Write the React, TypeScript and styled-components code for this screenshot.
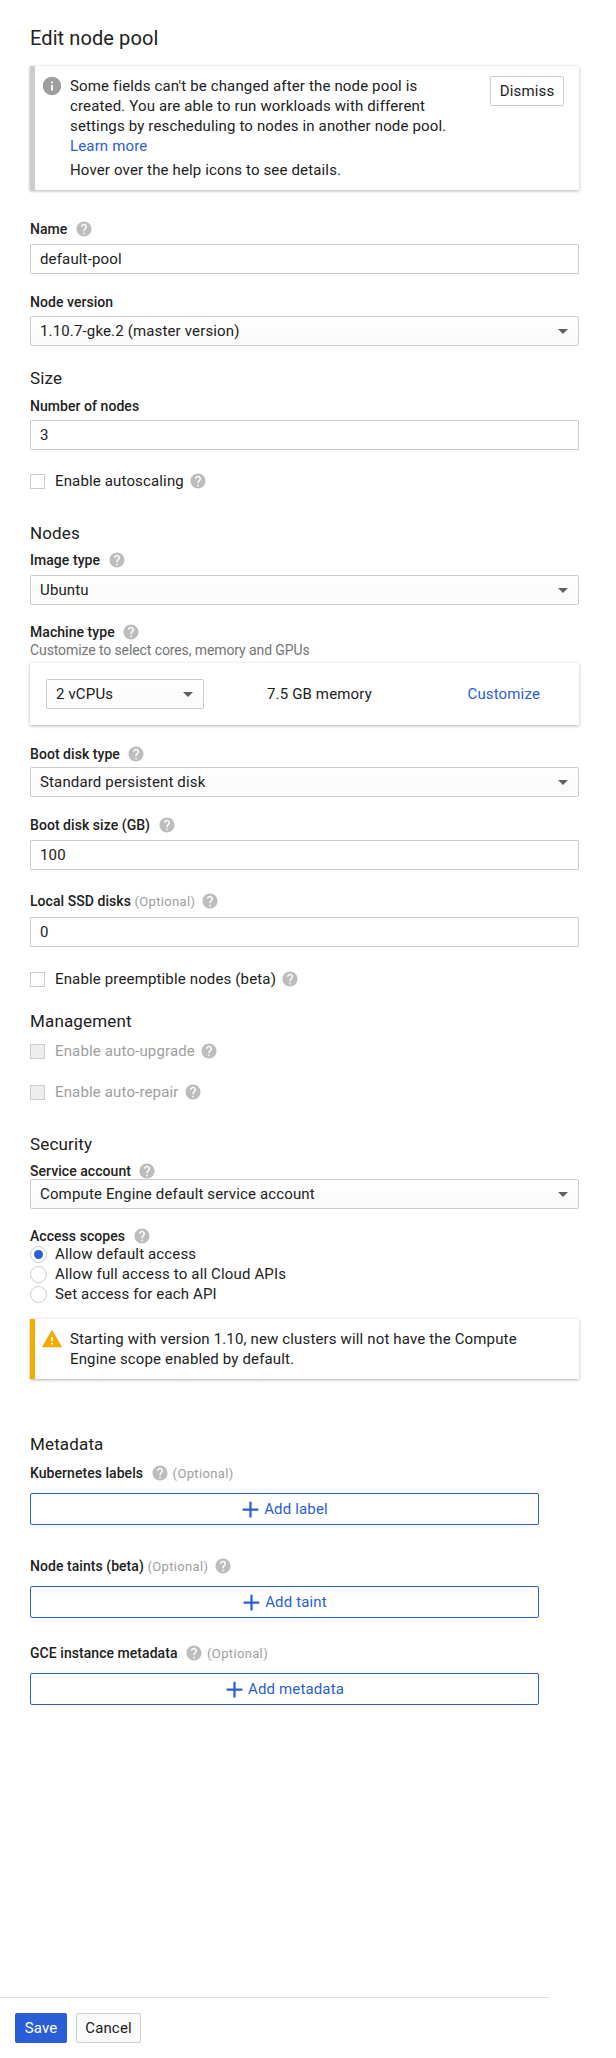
import { ReactNode } from 'react';
import styled, { createGlobalStyle } from 'styled-components';

const GlobalStyle = createGlobalStyle`
  html, body {
    margin: 0;
    padding: 0;
    background: #fff;
  }

  body {
    font-family: Roboto, "Liberation Sans", sans-serif;
    font-size: 15px;
    letter-spacing: 0.15px;
    color: #212121;
  }
`;

const BLUE = '#2a5ed6';

const Page = styled.div`
  display: flex;
  flex-direction: column;
  width: 616px;
  height: 2058px;
  box-sizing: border-box;
`;

const Form = styled.div`
  display: flex;
  flex-direction: column;
  flex: 1;
  padding: 24px 37px 0 30px;
`;

const Title = styled.h1`
  margin: 0;
  font-size: 20px;
  font-weight: 400;
  line-height: 28px;
  letter-spacing: 0.1px;
`;

const Banner = styled.div<{ $accent: string; $top: number }>`
  display: flex;
  margin-top: ${({ $top }) => $top}px;
  padding: 10px 15px 10px 8px;
  border-left: 5px solid ${({ $accent }) => $accent};
  background: #fff;
  box-shadow: 0 1px 3px rgba(0, 0, 0, 0.3);
`;

const BannerIcon = styled.svg<{ $color: string }>`
  flex: none;
  width: 22px;
  height: 22px;
  margin: -1px 7px 0 -2px;
  fill: ${({ $color }) => $color};
`;

const BannerBody = styled.div`
  flex: 1;
  line-height: 20px;
`;

const BannerLine = styled.p`
  margin: 4px 0 0;
`;

const Link = styled.a`
  color: ${BLUE};
  text-decoration: none;
`;

const OutlineButton = styled.button`
  width: 74px;
  height: 30px;
  padding: 0;
  border: 1px solid #ccc;
  border-radius: 2px;
  background: #fff;
  font: inherit;
  letter-spacing: inherit;
  color: #212121;
`;

const Heading = styled.h2<{ $top: number }>`
  height: 24px;
  margin: ${({ $top }) => $top}px 0 0;
  font-size: 17px;
  font-weight: 400;
  line-height: 26px;
`;

const Field = styled.div<{ $top: number }>`
  display: flex;
  flex-direction: column;
  margin-top: ${({ $top }) => $top}px;
`;

const Label = styled.div<{ $gap?: number; $spread?: number }>`
  display: flex;
  align-items: center;
  gap: ${({ $spread }) => $spread ?? 4}px;
  height: 18px;
  margin-bottom: ${({ $gap }) => $gap ?? 5}px;
  font-size: 14px;
  font-weight: 500;
  letter-spacing: 0.05px;
  white-space: pre;
`;

const Optional = styled.span`
  font-size: 13px;
  font-weight: 400;
  letter-spacing: 0.35px;
  color: #9e9e9e;
`;

const Hint = styled.div`
  margin-bottom: 4px;
  font-size: 14px;
  letter-spacing: -0.1px;
  line-height: 18px;
  color: #757575;
`;

const HelpGlyph = styled.svg`
  flex: none;
  width: 18px;
  height: 18px;
  fill: #bdbdbd;
`;

const TextInput = styled.div`
  display: flex;
  align-items: center;
  height: 30px;
  box-sizing: border-box;
  padding: 0 9px;
  border: 1px solid #ccc;
  border-radius: 1px;
  background: #fff;
`;

const Select = styled.div<{ $width?: number }>`
  display: flex;
  align-items: center;
  justify-content: space-between;
  width: ${({ $width }) => ($width ? `${$width}px` : 'auto')};
  height: 30px;
  box-sizing: border-box;
  padding: 0 10px 0 9px;
  border: 1px solid #ccc;
  border-radius: 2px;
  background: linear-gradient(#fff, #fafafa);
`;

const Caret = styled.span`
  width: 0;
  height: 0;
  border-left: 5px solid transparent;
  border-right: 5px solid transparent;
  border-top: 5px solid #616161;
`;

const CheckRow = styled.div<{ $top: number; $disabled?: boolean }>`
  display: flex;
  align-items: center;
  height: 20px;
  margin-top: ${({ $top }) => $top}px;
  color: ${({ $disabled }) => ($disabled ? '#9e9e9e' : '#212121')};
`;

const Box = styled.span<{ $disabled?: boolean }>`
  flex: none;
  width: 15px;
  height: 15px;
  box-sizing: border-box;
  margin-right: 10px;
  border: 1px solid #ccc;
  background: ${({ $disabled }) => ($disabled ? '#eee' : '#fff')};
`;

const RowHelp = styled.span`
  display: flex;
  margin-left: 5px;
`;

const MachineCard = styled.div`
  display: grid;
  grid-template-columns: 158px 1fr auto;
  align-items: center;
  height: 62px;
  box-sizing: border-box;
  padding: 0 39px 0 16px;
  background: #fff;
  box-shadow: 0 1px 3px rgba(0, 0, 0, 0.3);
`;

const Memory = styled.span`
  padding-left: 63px;
`;

const RadioGroup = styled.div`
  display: flex;
  flex-direction: column;
`;

const RadioRow = styled.div`
  display: flex;
  align-items: center;
  height: 20px;
`;

const RadioDot = styled.span<{ $on?: boolean }>`
  flex: none;
  display: flex;
  align-items: center;
  justify-content: center;
  width: 17px;
  height: 17px;
  box-sizing: border-box;
  margin-right: 8px;
  border: 1px solid #ccc;
  border-radius: 50%;
  background: #fff;

  &::after {
    content: '';
    display: ${({ $on }) => ($on ? 'block' : 'none')};
    width: 9px;
    height: 9px;
    border-radius: 50%;
    background: ${BLUE};
  }
`;

const AddButton = styled.button`
  display: flex;
  align-items: center;
  justify-content: center;
  width: 509px;
  height: 32px;
  padding: 0 4px 0 0;
  border: 1px solid ${BLUE};
  border-radius: 2px;
  background: #fff;
  font: inherit;
  letter-spacing: inherit;
  color: ${BLUE};
`;

const PlusIcon = styled.svg`
  width: 27px;
  height: 27px;
  fill: ${BLUE};
`;

const Footer = styled.div`
  display: flex;
  gap: 9px;
  width: 549px;
  box-sizing: border-box;
  padding: 15px 0 15px 15px;
  border-top: 1px solid #e0e0e0;
`;

const SaveButton = styled.button`
  width: 52px;
  height: 30px;
  padding: 0;
  border: 0;
  border-radius: 2px;
  background: ${BLUE};
  font: inherit;
  letter-spacing: inherit;
  color: #fff;
`;

const CancelButton = styled(OutlineButton)`
  width: 65px;
  background: #fafafa;
`;

const Help = () => (
  <HelpGlyph viewBox='0 0 24 24'>
    <path d='M12 2C6.48 2 2 6.48 2 12s4.48 10 10 10 10-4.48 10-10S17.52 2 12 2zm1 17h-2v-2h2v2zm2.07-7.75l-.9.92C13.45 12.9 13 13.5 13 15h-2v-.5c0-1.1.45-2.1 1.17-2.83l1.24-1.26c.37-.36.59-.86.59-1.41 0-1.1-.9-2-2-2s-2 .9-2 2H8c0-2.21 1.79-4 4-4s4 1.79 4 4c0 .88-.36 1.68-.93 2.25z' />
  </HelpGlyph>
);

const Dropdown = ({ value, width }: { value: string; width?: number }) => (
  <Select $width={width}>
    {value}
    <Caret />
  </Select>
);

const Check = ({ text, top, disabled }: { text: string; top: number; disabled?: boolean }) => (
  <CheckRow $top={top} $disabled={disabled}>
    <Box $disabled={disabled} />
    {text}
    <RowHelp>
      <Help />
    </RowHelp>
  </CheckRow>
);

const AddField = ({
  top,
  label,
  text,
  spread,
}: {
  top: number;
  label: ReactNode;
  text: string;
  spread?: number;
}) => (
  <Field $top={top}>
    <Label $gap={11} $spread={spread}>
      {label}
    </Label>
    <AddButton>
      <PlusIcon viewBox='0 0 24 24'>
        <path d='M19 13h-6v6h-2v-6H5v-2h6V5h2v6h6v2z' />
      </PlusIcon>
      {text}
    </AddButton>
  </Field>
);

const App = () => {
  return (
    <Page>
      <GlobalStyle />
      <Form>
        <Title>Edit node pool</Title>

        <Banner $accent='#ccc' $top={14}>
          <BannerIcon $color='#9e9e9e' viewBox='0 0 24 24'>
            <path d='M12 2C6.48 2 2 6.48 2 12s4.48 10 10 10 10-4.48 10-10S17.52 2 12 2zm1 15h-2v-6h2v6zm0-8h-2V7h2v2z' />
          </BannerIcon>
          <BannerBody>
            Some fields can't be changed after the node pool is
            <br />
            created. You are able to run workloads with different
            <br />
            settings by rescheduling to nodes in another node pool.
            <br />
            <Link>Learn more</Link>
            <BannerLine>Hover over the help icons to see details.</BannerLine>
          </BannerBody>
          <OutlineButton>Dismiss</OutlineButton>
        </Banner>

        <Field $top={30}>
          <Label $gap={6}>
            Name <Help />
          </Label>
          <TextInput>default-pool</TextInput>
        </Field>

        <Field $top={19}>
          <Label>Node version</Label>
          <Dropdown value='1.10.7-gke.2 (master version)' />
        </Field>

        <Heading $top={19}>Size</Heading>
        <Field $top={8}>
          <Label>Number of nodes</Label>
          <TextInput>3</TextInput>
        </Field>
        <Check text='Enable autoscaling' top={21} />

        <Heading $top={29}>Nodes</Heading>
        <Field $top={7}>
          <Label $gap={6}>
            Image type <Help />
          </Label>
          <Dropdown value='Ubuntu' />
        </Field>

        <Field $top={18}>
          <Label $gap={0}>
            Machine type <Help />
          </Label>
          <Hint>Customize to select cores, memory and GPUs</Hint>
          <MachineCard>
            <Dropdown value='2 vCPUs' width={158} />
            <Memory>7.5 GB memory</Memory>
            <Link>Customize</Link>
          </MachineCard>
        </Field>

        <Field $top={20}>
          <Label $gap={4}>
            Boot disk type <Help />
          </Label>
          <Dropdown value='Standard persistent disk' />
        </Field>

        <Field $top={19}>
          <Label $gap={6}>
            Boot disk size (GB) <Help />
          </Label>
          <TextInput>100</TextInput>
        </Field>

        <Field $top={22}>
          <Label $gap={7} $spread={6}>
            <span>
              Local SSD disks <Optional>(Optional)</Optional>
            </span>
            <Help />
          </Label>
          <TextInput>0</TextInput>
        </Field>
        <Check text='Enable preemptible nodes (beta)' top={22} />

        <Heading $top={19}>Management</Heading>
        <Check text='Enable auto-upgrade' top={9} disabled />
        <Check text='Enable auto-repair' top={21} disabled />

        <Heading $top={29}>Security</Heading>
        <Field $top={7}>
          <Label $gap={-1}>
            Service account <Help />
          </Label>
          <Dropdown value='Compute Engine default service account' />
        </Field>

        <Field $top={18}>
          <Label $gap={-1}>
            Access scopes <Help />
          </Label>
          <RadioGroup>
            <RadioRow>
              <RadioDot $on />
              Allow default access
            </RadioRow>
            <RadioRow>
              <RadioDot />
              Allow full access to all Cloud APIs
            </RadioRow>
            <RadioRow>
              <RadioDot />
              Set access for each API
            </RadioRow>
          </RadioGroup>
        </Field>

        <Banner $accent='#f4ab00' $top={15}>
          <BannerIcon $color='#f4ab00' viewBox='0 0 24 24'>
            <path d='M1 21h22L12 2 1 21zm12-3h-2v-2h2v2zm0-4h-2v-4h2v4z' />
          </BannerIcon>
          <BannerBody>
            Starting with version 1.10, new clusters will not have the Compute
            <br />
            Engine scope enabled by default.
          </BannerBody>
        </Banner>

        <Heading $top={52}>Metadata</Heading>
        <AddField
          top={9}
          text='Add label'
          label={
            <>
              Kubernetes labels <Help />
              <Optional>(Optional)</Optional>
            </>
          }
        />
        <AddField
          top={32}
          text='Add taint'
          spread={6}
          label={
            <>
              <span>
                Node taints (beta) <Optional>(Optional)</Optional>
              </span>
              <Help />
            </>
          }
        />
        <AddField
          top={26}
          text='Add metadata'
          label={
            <>
              GCE instance metadata <Help />
              <Optional>(Optional)</Optional>
            </>
          }
        />
      </Form>

      <Footer>
        <SaveButton>Save</SaveButton>
        <CancelButton>Cancel</CancelButton>
      </Footer>
    </Page>
  );
};

export default App;
